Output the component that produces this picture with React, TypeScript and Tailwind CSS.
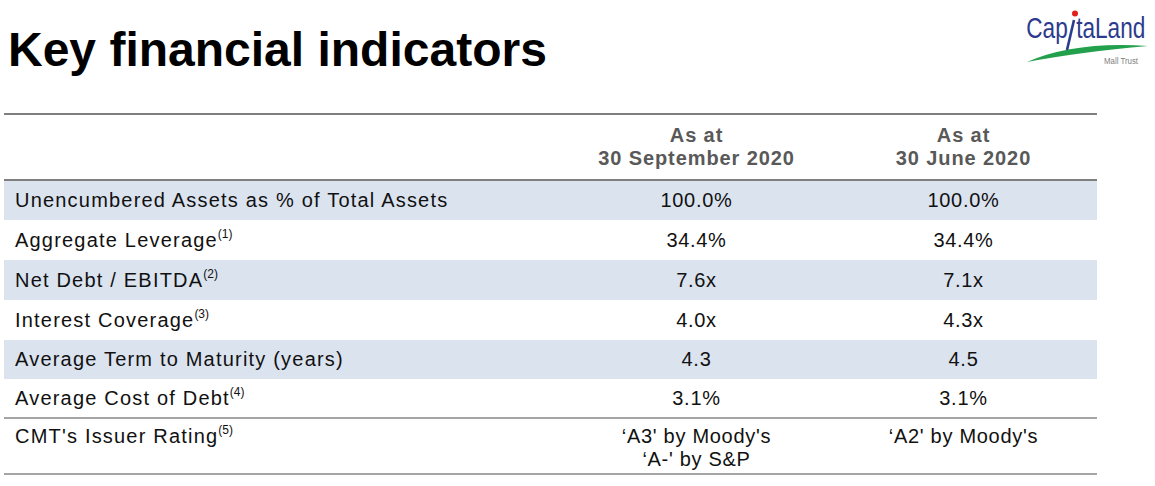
import React from "react";

const rows: { label: string; sup?: string; a: string; b: string; blue: boolean; h: string }[] = [
  { label: "Unencumbered Assets as % of Total Assets", a: "100.0%", b: "100.0%", blue: true, h: "h-[39px]" },
  { label: "Aggregate Leverage", sup: "(1)", a: "34.4%", b: "34.4%", blue: false, h: "h-[40px]" },
  { label: "Net Debt / EBITDA", sup: "(2)", a: "7.6x", b: "7.1x", blue: true, h: "h-[40px]" },
  { label: "Interest Coverage", sup: "(3)", a: "4.0x", b: "4.3x", blue: false, h: "h-[40px]" },
  { label: "Average Term to Maturity (years)", a: "4.3", b: "4.5", blue: true, h: "h-[39px]" },
];

function Logo() {
  return (
    <svg width="135" height="65" viewBox="0 0 135 65" className="shrink-0 mt-[5px]">
      <path d="M7,57 Q55,36 128,41 Q60,47 7,57 Z" fill="#22a04b" />
      <text
        transform="scale(0.78,1)"
        y="33"
        fontFamily="'Liberation Sans', Arial, sans-serif"
        fontSize="29"
        fill="#2c3b8e"
      >
        <tspan x="8">Cap</tspan>
        <tspan x="62" fillOpacity="0">i</tspan>
        <tspan x="72">taLand</tspan>
      </text>
      <line x1="54" y1="15" x2="47" y2="45" stroke="#2c3b8e" strokeWidth="2.6" />
      <circle cx="55" cy="8.5" r="3" fill="#e3201b" />
      <text
        x="84"
        y="59"
        fontFamily="'Liberation Sans', Arial, sans-serif"
        fontSize="8.5"
        fill="#7f7f7f"
        textLength="34"
        lengthAdjust="spacingAndGlyphs"
      >
        Mall Trust
      </text>
    </svg>
  );
}

export default function App() {
  return (
    <div className="w-[1155px] h-[486px] bg-white overflow-hidden font-['Liberation_Sans',Arial,sans-serif] text-[#111]">
      <div className="flex justify-between items-start h-[113px]">
        <h1 className="ml-[8px] mt-[26px] text-[48px] leading-[48px] font-bold text-black">
          Key financial indicators
        </h1>
        <Logo />
      </div>

      <div className="ml-[4px] w-[1093px]">
        <div className="grid grid-cols-[559px_267px_267px] h-[68px] border-y-2 border-[#7f7f7f]">
          <div />
          <div className="flex flex-col items-center justify-center text-[20px] leading-[23px] font-bold text-[#595959] tracking-[0.9px]">
            <span>As at</span>
            <span>30 September 2020</span>
          </div>
          <div className="flex flex-col items-center justify-center text-[20px] leading-[23px] font-bold text-[#595959] tracking-[0.9px]">
            <span>As at</span>
            <span>30 June 2020</span>
          </div>
        </div>

        {rows.map((r) => (
          <div
            key={r.label}
            className={`grid grid-cols-[559px_267px_267px] items-center text-[20px] leading-[23px] tracking-[0.7px] ${r.h} ${
              r.blue ? "bg-[#dbe3ef]" : "bg-white"
            }`}
          >
            <div className="pl-[11px] whitespace-nowrap tracking-[1.2px]">
              {r.label}
              {r.sup && <sup className="text-[12px] -top-[9px] tracking-normal">{r.sup}</sup>}
            </div>
            <div className="text-center">{r.a}</div>
            <div className="text-center">{r.b}</div>
          </div>
        ))}

        <div className="grid grid-cols-[559px_267px_267px] items-center text-[20px] leading-[23px] tracking-[0.7px] h-[40px] border-b-2 border-[#a5a5a5]">
          <div className="pl-[11px] whitespace-nowrap tracking-[1.2px]">
            Average Cost of Debt<sup className="text-[12px] -top-[9px] tracking-normal">(4)</sup>
          </div>
          <div className="text-center">3.1%</div>
          <div className="text-center">3.1%</div>
        </div>

        <div className="grid grid-cols-[559px_267px_267px] items-start text-[20px] leading-[23px] tracking-[0.7px] h-[56px] pt-[6px] border-b-2 border-[#a5a5a5]">
          <div className="pl-[11px] whitespace-nowrap tracking-[1.2px]">
            CMT's Issuer Rating<sup className="text-[12px] -top-[9px] tracking-normal">(5)</sup>
          </div>
          <div className="flex flex-col items-center">
            <span>‘A3' by Moody's</span>
            <span>‘A-' by S&amp;P</span>
          </div>
          <div className="flex flex-col items-center">
            <span>‘A2' by Moody's</span>
          </div>
        </div>
      </div>
    </div>
  );
}
